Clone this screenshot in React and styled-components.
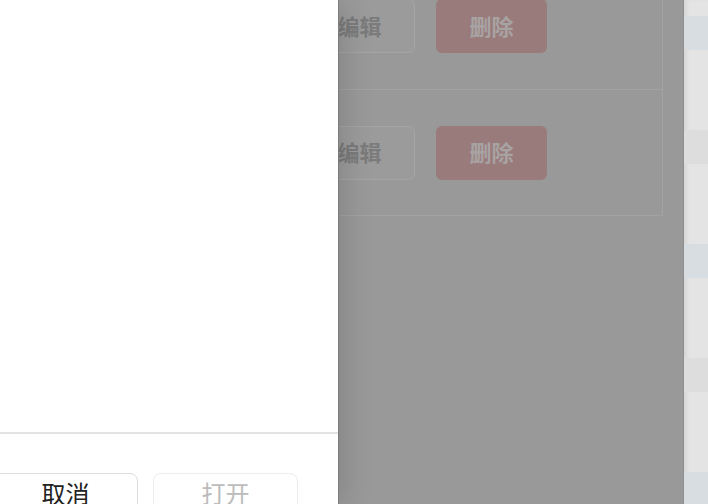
import React from 'react'
import styled, { createGlobalStyle } from 'styled-components'

const GlobalStyle = createGlobalStyle`
  html, body {
    margin: 0;
    padding: 0;
    background: #999;
    font-family: "Noto Sans CJK SC", "Noto Sans", sans-serif;
  }
`

const rows = [
  { id: 1 },
  { id: 2 },
]

const stripRows = ['blue', 'plain', 'gray', 'plain', 'blue', 'plain', 'gray', 'plain', 'blue']

function App() {
  return (
    <>
      <GlobalStyle />
      <Screen>
        <Window>
          <Card>
            {rows.map(r => (
              <Row key={r.id}>
                <EditButton>编辑</EditButton>
                <DeleteButton>删除</DeleteButton>
              </Row>
            ))}
          </Card>
        </Window>
        <Strip>
          {stripRows.map((kind, i) => (
            <StripRow key={i} kind={kind} />
          ))}
        </Strip>
        <Sheet>
          <SheetBody />
          <Footer>
            <FooterButton>取消</FooterButton>
            <FooterButton disabled>打开</FooterButton>
          </Footer>
        </Sheet>
      </Screen>
    </>
  )
}

export default App

const Screen = styled.div`
  position: relative;
  width: 708px;
  height: 504px;
  overflow: hidden;
  display: flex;
`

const Window = styled.div`
  width: 684px;
  flex-shrink: 0;
  background: #999;
  border-right: 1px solid #8f8f8f;
  box-sizing: border-box;
  padding: 0 20px 0 20px;
`

const Card = styled.div`
  margin-top: -37px;
  border: 1px solid #a2a2a2;
  border-top: none;
`

const Row = styled.div`
  display: flex;
  align-items: center;
  gap: 21px;
  height: 126px;
  padding-left: 283px;
  & + & {
    border-top: 1px solid #a2a2a2;
    height: 125px;
  }
`

const BaseButton = styled.div`
  width: 111px;
  height: 54px;
  box-sizing: border-box;
  border-radius: 6px;
  display: flex;
  align-items: center;
  justify-content: center;
  padding-bottom: 3px;
  font-size: 22px;
  font-weight: 700;
`

const EditButton = styled(BaseButton)`
  border: 1px solid #a5a5a5;
  background: #9b9b9b;
  color: #7b7b7b;
`

const DeleteButton = styled(BaseButton)`
  background: #997b7b;
  color: #a8a3a3;
`

const Strip = styled.div`
  flex: 1;
  background: #e4e4e4;
  box-shadow: inset 4px 0 4px -2px rgba(0, 0, 0, 0.08);
  display: flex;
  flex-direction: column;
  padding-top: 16px;
`

const StripRow = styled.div`
  flex-shrink: 0;
  height: ${p => (p.kind === 'plain' ? 80 : 34)}px;
  background: ${p => (p.kind === 'blue' ? '#d8dde2' : p.kind === 'gray' ? '#dddddd' : 'transparent')};
`

const Sheet = styled.div`
  position: absolute;
  left: 0;
  top: 0;
  bottom: 0;
  width: 338px;
  background: #fff;
  box-shadow: 1px 0 0 #7d7d7d, 6px 0 28px rgba(0, 0, 0, 0.14);
  display: flex;
  flex-direction: column;
`

const SheetBody = styled.div`
  height: 432px;
  flex-shrink: 0;
  border-bottom: 2px solid #e3e3e3;
`

const Footer = styled.div`
  display: flex;
  justify-content: flex-end;
  gap: 15px;
  padding: 39px 40px 0 0;
  overflow: hidden;
`

const FooterButton = styled.div`
  flex-shrink: 0;
  width: 145px;
  height: 48px;
  box-sizing: border-box;
  border: 1px solid ${p => (p.disabled ? '#ececec' : '#dcdcdc')};
  border-radius: 8px;
  background: #fff;
  color: ${p => (p.disabled ? '#bcbcbc' : '#222')};
  font-size: 24px;
  display: flex;
  justify-content: center;
  padding-top: 1px;
  line-height: 36px;
`
